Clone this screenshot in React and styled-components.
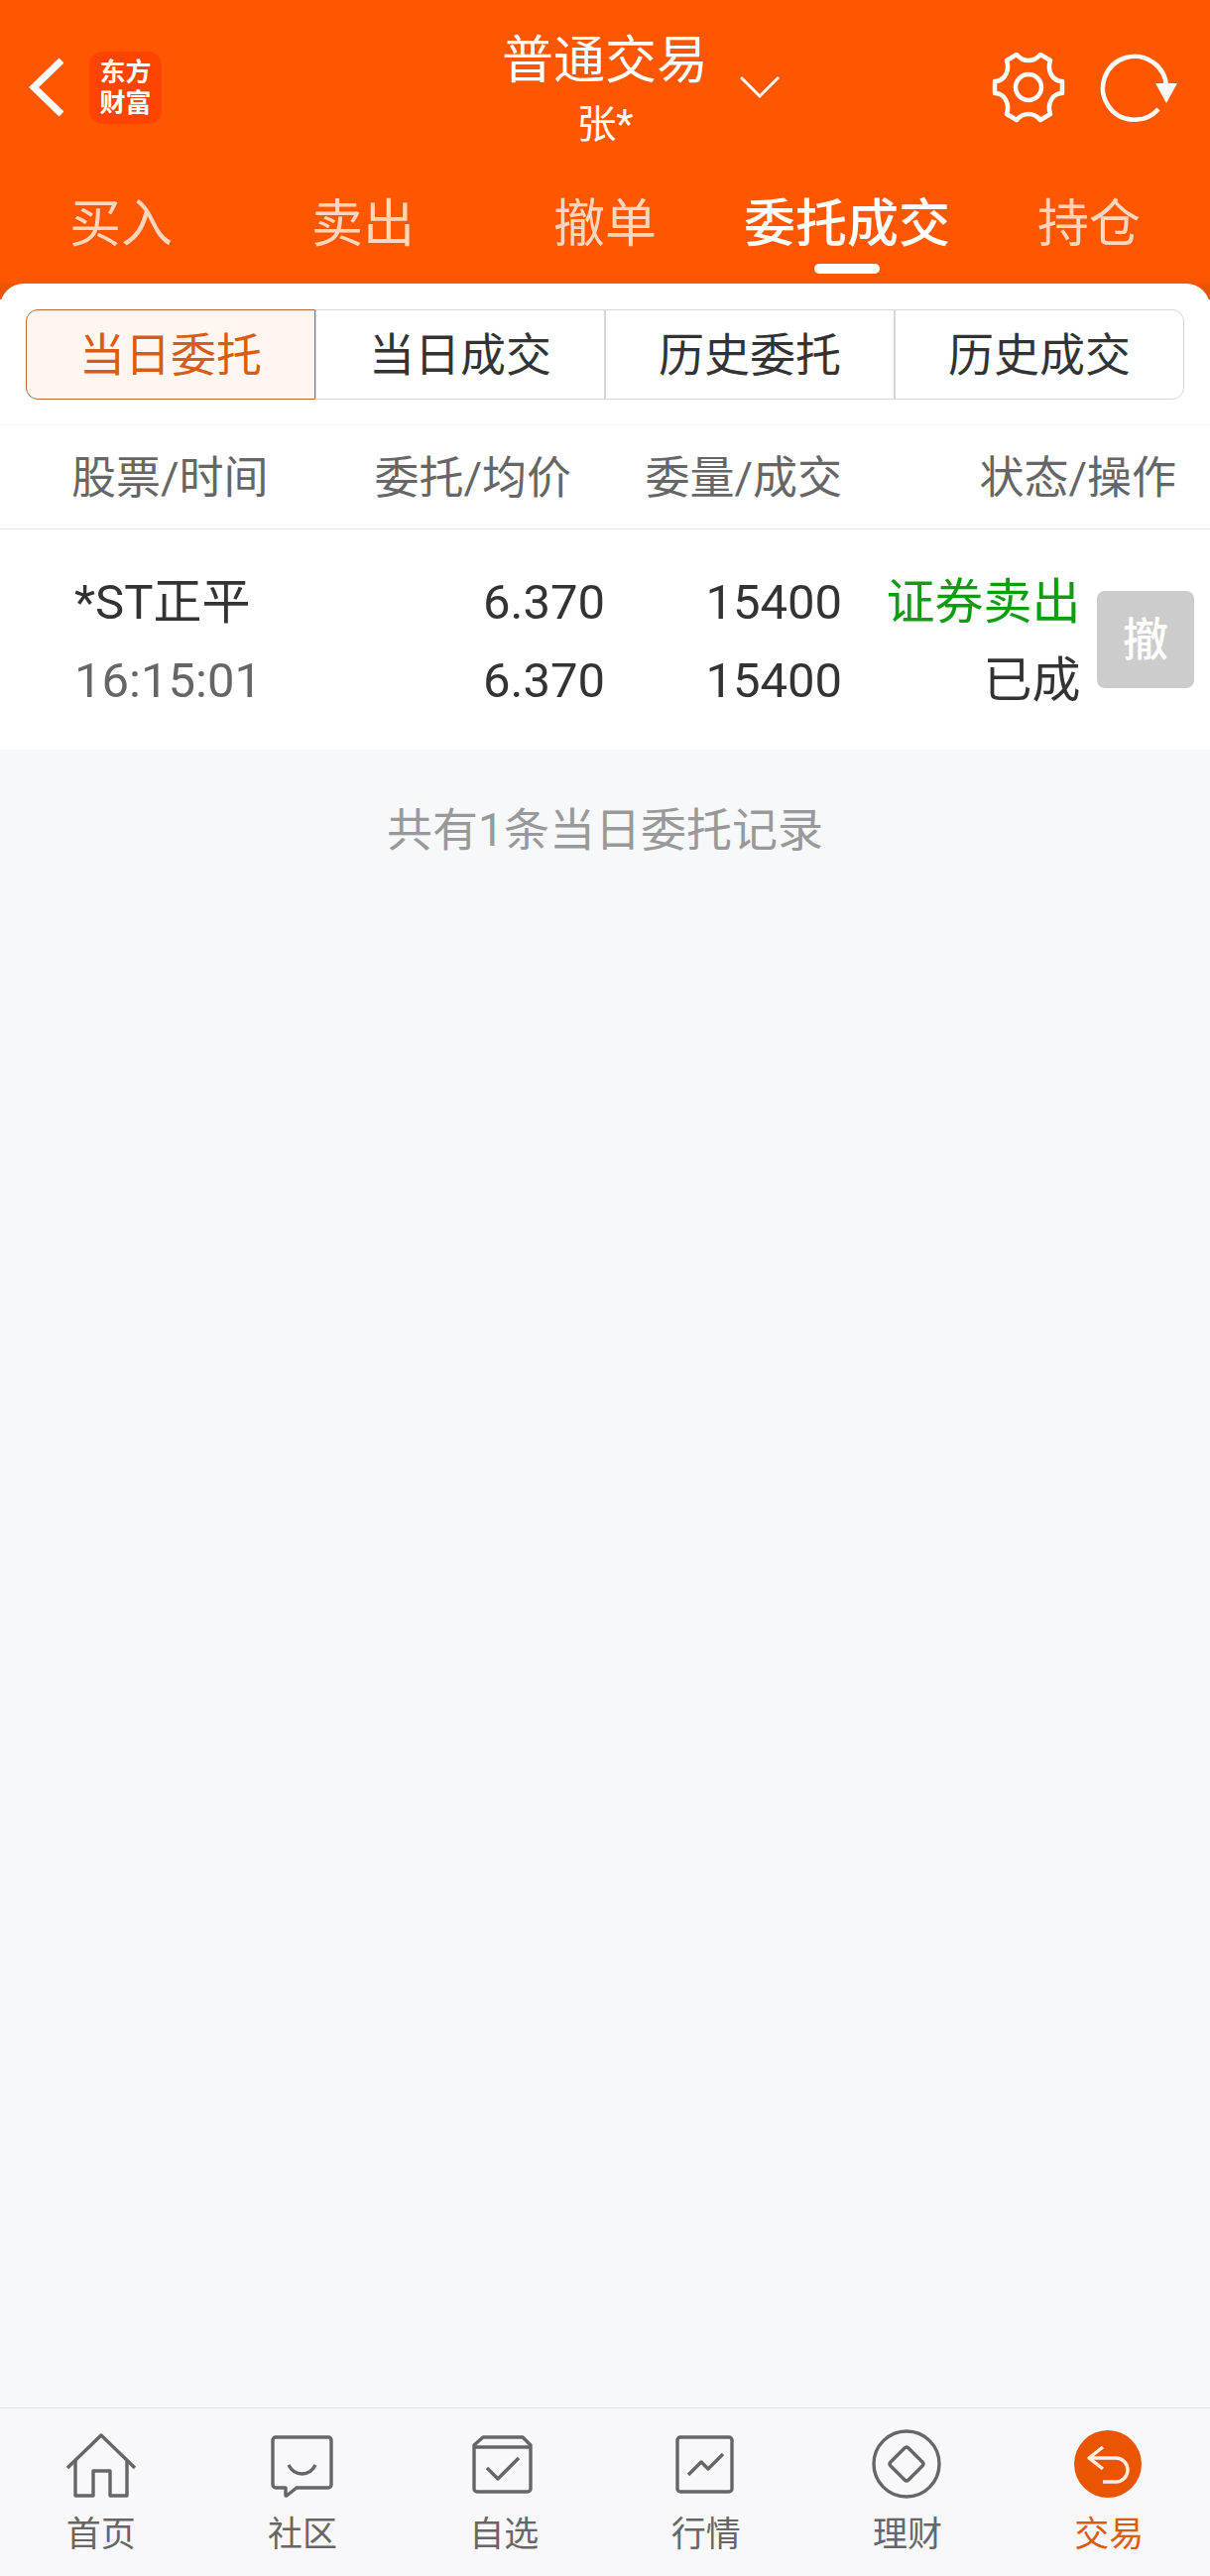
import React, { useState } from "react";
import styled, { createGlobalStyle } from "styled-components";

const GlobalStyle = createGlobalStyle`
  * {
    box-sizing: border-box;
  }
  body {
    margin: 0;
    background: #f7f8fa;
    font-family: Roboto, "Noto Sans CJK SC", sans-serif;
    color: #333;
  }
  button {
    padding: 0;
    border: 0;
    background: none;
    font: inherit;
    color: inherit;
    cursor: pointer;
  }
  svg {
    display: block;
    fill: none;
    stroke: currentColor;
  }
`;

const Wrapper = styled.div`
  display: flex;
  flex-direction: column;
  width: 100%;
  min-height: 100vh;
`;

// 상단 헤더
const Header = styled.header`
  background: #ff5600;
  color: #fff;
`;
const TopBar = styled.div`
  display: grid;
  grid-template-columns: 1fr auto 1fr;
  align-items: center;
  height: 176px;
`;
const TopLeft = styled.div`
  display: flex;
  align-items: center;
  gap: 26px;
  padding-left: 29px;
`;
const Logo = styled.div`
  width: 73px;
  height: 73px;
  padding-top: 6px;
  border-radius: 14px;
  background: #ff4400;
  font-size: 26px;
  font-weight: 700;
  line-height: 31px;
  text-align: center;
`;
const TitleBox = styled.div`
  padding-top: 12px;
  line-height: 64px;
  text-align: center;
`;
const Title = styled.h1`
  margin: 0;
  font-size: 52px;
  font-weight: 400;
`;
const Account = styled.div`
  font-size: 40px;
`;
const TopRight = styled.div`
  display: flex;
  align-items: center;
  gap: 34px;
  padding: 0 32px;
`;
const Spacer = styled.div`
  flex: 1;
`;

const Tabs = styled.nav`
  display: grid;
  grid-template-columns: repeat(5, 1fr);
  height: 110px;
`;
const Tab = styled.button`
  display: flex;
  flex-direction: column;
  align-items: center;
  gap: 7px;
  padding-top: 19px;
  font-size: 52px;
  line-height: 64px;
  color: ${(props) => (props.$active ? "#fff" : "#ffd6bd")};
  font-weight: ${(props) => (props.$active ? 500 : 400)};

  &::after {
    content: "";
    width: 66px;
    height: 10px;
    border-radius: 5px;
    background: ${(props) => (props.$active ? "#fff" : "transparent")};
  }
`;

// 흰색 영역
const SheetBack = styled.div`
  background: linear-gradient(#e85500 16px, #fff 16px);
`;
const Sheet = styled.main`
  border-radius: 24px 24px 0 0;
  background: #fff;
`;
const Segments = styled.div`
  display: grid;
  grid-template-columns: repeat(4, 1fr);
  padding: 26px 26px 25px;
`;
const Segment = styled.button`
  height: 91px;
  border: 1px solid ${(props) => (props.$active ? "#b0683c" : "#d6d6d6")};
  background: ${(props) => (props.$active ? "#fff6f2" : "#fff")};
  color: ${(props) => (props.$active ? "#d85c14" : "#333")};
  font-size: 46px;
  line-height: 64px;

  &:first-child {
    border-radius: 12px 0 0 12px;
  }
  &:last-child {
    border-radius: 0 12px 12px 0;
  }
`;

const Table = styled.table`
  width: 100%;
  table-layout: fixed;
  border-collapse: collapse;
`;
const HeadRow = styled.tr`
  height: 105px;
  border-top: 1px solid #f6f6f6;
  border-bottom: 1px solid #ececec;
`;
const HeadCell = styled.th`
  padding: 4px ${(props) => props.$right || 0}px 0 ${(props) => props.$left || 0}px;
  color: #666;
  font-size: 45px;
  font-weight: 400;
  line-height: 64px;
  text-align: ${(props) => (props.$left ? "left" : "right")};
  white-space: nowrap;
`;
const Row = styled.tr`
  height: 222px;
`;
const Cell = styled.td`
  padding: 4px 0 0 ${(props) => props.$left || 0}px;
  font-size: 49px;
  line-height: 79px;
  text-align: ${(props) => (props.$left ? "left" : "right")};
  white-space: nowrap;
`;
const ActionCell = styled.td`
  padding: 0;
`;
const Line = styled.div`
  color: ${(props) => props.$color || "#333"};
`;
const CancelButton = styled.button`
  display: block;
  width: 98px;
  height: 98px;
  margin: 0 16px 0 auto;
  border-radius: 8px;
  background: #ccc;
  color: #fff;
  font-size: 46px;
  font-weight: 500;
  line-height: 98px;
`;

const Summary = styled.p`
  flex: 1;
  margin: 0;
  padding-top: 49px;
  color: #999;
  font-size: 46px;
  line-height: 64px;
  text-align: center;
`;

// 하단 메뉴
const BottomNav = styled.nav`
  display: grid;
  grid-template-columns: repeat(6, 1fr);
  border-top: 1px solid #e2e2e4;
  background: #f8f8fa;
`;
const NavItem = styled.button`
  display: flex;
  flex-direction: column;
  align-items: center;
  gap: 12px;
  padding: 18px 0 19px;
  color: ${(props) => (props.$active ? "#d85c14" : "#666")};
  font-size: 35px;
  line-height: 44px;
`;

const NavIcon = ({ children }) => (
  <svg width="76" height="76" viewBox="0 0 76 76" strokeWidth="3.4" strokeLinejoin="round" aria-hidden="true">
    {children}
  </svg>
);

const tabs = ["买入", "卖出", "撤单", "委托成交", "持仓"];
const segments = ["当日委托", "当日成交", "历史委托", "历史成交"];
const orders = [
  {
    name: "*ST正平",
    time: "16:15:01",
    price: "6.370",
    average: "6.370",
    amount: "15400",
    done: "15400",
    side: "证券卖出",
    status: "已成",
  },
];
const navItems = [
  {
    label: "首页",
    icon: (
      <>
        <path d="M4 42L38 9L72 42" />
        <path d="M12 35V70H30V45H47V70H64V35" />
      </>
    ),
  },
  {
    label: "社区",
    icon: (
      <>
        <path d="M11 11H64a3 3 0 0 1 3 3V59a3 3 0 0 1-3 3H32L22 70H21V62H11a3 3 0 0 1-3-3V14a3 3 0 0 1 3-3Z" />
        <path d="M24 39C30 51 45 51 51 39" />
      </>
    ),
  },
  {
    label: "自选",
    icon: (
      <>
        <path d="M17 11H57L65 19V63a3 3 0 0 1-3 3H11a3 3 0 0 1-3-3V19Z" />
        <path d="M8 21H65M21 42L32 53L53 32" />
      </>
    ),
  },
  {
    label: "行情",
    icon: (
      <>
        <rect x="9" y="11" width="55" height="55" rx="3" />
        <path d="M20 49L33 36L40 43L55 28" />
      </>
    ),
  },
  {
    label: "理财",
    icon: (
      <>
        <circle cx="37" cy="38" r="33" />
        <path d="M35 22Q37 20 39 22L53 36Q55 38 53 40L39 54Q37 56 35 54L21 40Q19 38 21 36Z" />
      </>
    ),
  },
  {
    label: "交易",
    icon: (
      <>
        <circle cx="37" cy="38" r="34" fill="#ea5504" stroke="none" />
        <path d="M32 21L18 32L32 43M18 32H45a12 12 0 0 1 0 24H32" stroke="#fff0e2" />
      </>
    ),
  },
];

const App = () => {
  const [tab, setTab] = useState("委托成交");
  const [segment, setSegment] = useState("当日委托");
  const [nav, setNav] = useState("交易");

  return (
    <Wrapper>
      <GlobalStyle />
      <Header>
        <TopBar>
          <TopLeft>
            <button aria-label="返回">
              <svg width="35" height="60" viewBox="0 0 35 60" strokeWidth="7">
                <path d="M33 3L5 30L33 57" />
              </svg>
            </button>
            <Logo>
              东方
              <br />
              财富
            </Logo>
          </TopLeft>
          <TitleBox>
            <Title>普通交易</Title>
            <Account>张*</Account>
          </TitleBox>
          <TopRight>
            <button aria-label="切换账户">
              <svg width="40" height="24" viewBox="0 0 40 24" strokeWidth="3">
                <path d="M1 2L20 21L39 2" />
              </svg>
            </button>
            <Spacer />
            <button aria-label="设置">
              <svg width="74" height="72" viewBox="0 0 74 72" strokeWidth="4.5" strokeLinejoin="round">
                <path d="M25 3Q30 9 37 9Q44 9 49 3L59 9Q56 18 61 25Q65 30 71 30V42Q65 42 61 47Q56 54 59 63L49 69Q44 63 37 63Q30 63 25 69L15 63Q18 54 13 47Q9 42 3 42V30Q9 30 13 25Q18 18 15 9Z" />
                <circle cx="37" cy="36" r="13" />
              </svg>
            </button>
            <button aria-label="刷新">
              <svg width="80" height="74" viewBox="0 0 80 74" strokeWidth="4.5">
                <path d="M60 59A32 32 0 1 1 68 37" />
                <path d="M57 33H79L68 53Z" fill="currentColor" stroke="none" />
              </svg>
            </button>
          </TopRight>
        </TopBar>
        <Tabs>
          {tabs.map((name) => (
            <Tab key={name} $active={name === tab} onClick={() => setTab(name)}>
              {name}
            </Tab>
          ))}
        </Tabs>
      </Header>

      <SheetBack>
        <Sheet>
          <Segments>
            {segments.map((name) => (
              <Segment key={name} $active={name === segment} onClick={() => setSegment(name)}>
                {name}
              </Segment>
            ))}
          </Segments>
          <Table>
            <colgroup>
              <col width="30%" />
              <col width="20%" />
              <col width="19.6%" />
              <col width="19.7%" />
              <col />
            </colgroup>
            <thead>
              <HeadRow>
                <HeadCell $left={72}>股票/时间</HeadCell>
                <HeadCell $right={34}>委托/均价</HeadCell>
                <HeadCell>委量/成交</HeadCell>
                <HeadCell colSpan={2} $right={34}>
                  状态/操作
                </HeadCell>
              </HeadRow>
            </thead>
            <tbody>
              {orders.map((order) => (
                <Row key={order.time}>
                  <Cell $left={75}>
                    <Line>{order.name}</Line>
                    <Line $color="#666">{order.time}</Line>
                  </Cell>
                  <Cell>
                    <Line>{order.price}</Line>
                    <Line>{order.average}</Line>
                  </Cell>
                  <Cell>
                    <Line>{order.amount}</Line>
                    <Line>{order.done}</Line>
                  </Cell>
                  <Cell>
                    <Line $color="#109c10">{order.side}</Line>
                    <Line>{order.status}</Line>
                  </Cell>
                  <ActionCell>
                    <CancelButton>撤</CancelButton>
                  </ActionCell>
                </Row>
              ))}
            </tbody>
          </Table>
        </Sheet>
      </SheetBack>
      <Summary>共有{orders.length}条当日委托记录</Summary>

      <BottomNav>
        {navItems.map((item) => (
          <NavItem key={item.label} $active={item.label === nav} onClick={() => setNav(item.label)}>
            <NavIcon>{item.icon}</NavIcon>
            {item.label}
          </NavItem>
        ))}
      </BottomNav>
    </Wrapper>
  );
};

export default App;
